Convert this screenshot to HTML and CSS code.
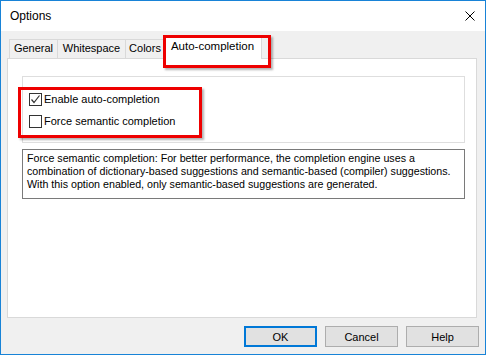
FILE: index.html
```html
<!DOCTYPE html>
<html lang="en">
<head>
    <meta charset="UTF-8">
    <title>Options</title>
    <link rel="stylesheet" href="styles.css">
</head>
<body>
    <div class="window">
        <div class="titlebar">
            <span class="title">Options</span>
            <svg class="close" width="10" height="10" viewBox="0 0 10 10">
                <path d="M0.5 0.5L9.5 9.5M9.5 0.5L0.5 9.5" stroke="#000" stroke-width="1" fill="none"/>
            </svg>
        </div>
        <div class="content">
            <div class="tabs">
                <div class="tab tab-general">General</div>
                <div class="tab tab-whitespace">Whitespace</div>
                <div class="tab tab-colors">Colors</div>
                <div class="tab tab-active">Auto-completion</div>
            </div>
            <div class="panel">
                <div class="group">
                    <div class="highlight"></div>
                    <label class="check-row">
                        <span class="checkbox checked">
                            <svg width="11" height="11" viewBox="0 0 11 11">
                                <path d="M1.5 5.5L4 8.5L9.5 1.5" stroke="#333" stroke-width="1.2" fill="none"/>
                            </svg>
                        </span>
                        <span>Enable auto-completion</span>
                    </label>
                    <label class="check-row">
                        <span class="checkbox"></span>
                        <span>Force semantic completion</span>
                    </label>
                </div>
                <div class="description">
                    Force semantic completion: For better performance, the completion engine uses a combination of dictionary-based suggestions and semantic-based (compiler) suggestions. With this option enabled, only semantic-based suggestions are generated.
                </div>
            </div>
            <div class="buttons">
                <button class="btn btn-default">OK</button>
                <button class="btn">Cancel</button>
                <button class="btn">Help</button>
            </div>
        </div>
    </div>
</body>
</html>
```

FILE: styles.css
```css
* {
    margin: 0;
    padding: 0;
    box-sizing: border-box;
    font-family: 'Liberation Sans', Arial, sans-serif;
}

body {
    width: 486px;
    height: 355px;
    overflow: hidden;
    background: #ffffff;
    color: #000000;
    font-size: 11px;
}

.window {
    width: 486px;
    height: 355px;
    border: 1px solid #1883d7;
    display: flex;
    flex-direction: column;
    background: #f0f0f0;
}

/* Title bar */
.titlebar {
    height: 30px;
    background: #ffffff;
    display: flex;
    align-items: center;
    justify-content: space-between;
    padding: 0 9px 0 9px;
}

.title {
    font-size: 12px;
}

.close {
    display: block;
    margin-right: 1px;
}

/* Content area */
.content {
    flex: 1;
    display: flex;
    flex-direction: column;
    padding: 5px 6px 7px 6px;
}

.tabs {
    display: flex;
    align-items: flex-end;
    height: 23px;
    margin-bottom: -1px;
    padding-left: 2px;
    position: relative;
    z-index: 1;
}

.tab {
    height: 19px;
    margin-bottom: 1px;
    border: 1px solid #d9d9d9;
    border-bottom: none;
    background: #f0f0f0;
    text-align: center;
    line-height: 17px;
    margin-right: -1px;
}

.tab-general { width: 49px; }
.tab-whitespace { width: 69px; }
.tab-colors { width: 40px; }

.tab-active {
    width: 99px;
    height: 23px;
    margin-bottom: 0;
    margin-left: -1px;
    background: #ffffff;
    line-height: 19px;
    position: relative;
    font-size: 11.5px;
}

.tab-active::after {
    content: '';
    position: absolute;
    left: -1px;
    top: -2px;
    width: 102px;
    height: 27px;
    border: 3px solid #ee0000;
    box-shadow: 2px 2px 2px rgba(0, 0, 0, 0.3);
}

/* Tab page */
.panel {
    flex: 1;
    margin-right: 2px;
    background: #ffffff;
    border: 1px solid #d9d9d9;
    padding: 17px 11px 0 14px;
    display: flex;
    flex-direction: column;
    gap: 6px;
}

.group {
    height: 67px;
    border: 1px solid #dedede;
    padding: 11px 0 0 6px;
    position: relative;
}

.highlight {
    position: absolute;
    left: -5px;
    top: 10px;
    width: 184px;
    height: 51px;
    border: 3px solid #ee0000;
    box-shadow: 2px 2px 2px rgba(0, 0, 0, 0.3);
}

.check-row {
    height: 22px;
    display: flex;
    align-items: center;
    gap: 2px;
}

.checkbox {
    width: 13px;
    height: 13px;
    border: 1px solid #333333;
    background: #ffffff;
    display: flex;
    align-items: center;
    justify-content: center;
}

.checkbox svg {
    display: block;
}

.description {
    height: 50px;
    border: 1px solid #7a7a7a;
    padding: 2px 4px;
    line-height: 13px;
    font-size: 10.7px;
}

/* Dialog buttons */
.buttons {
    display: flex;
    justify-content: flex-end;
    gap: 8px;
    margin-top: 8px;
}

.btn {
    width: 73px;
    height: 21px;
    background: #e1e1e1;
    border: 1px solid #adadad;
    font-size: 11px;
    color: #000000;
}

.btn-default {
    border: 2px solid #0078d7;
}
```
